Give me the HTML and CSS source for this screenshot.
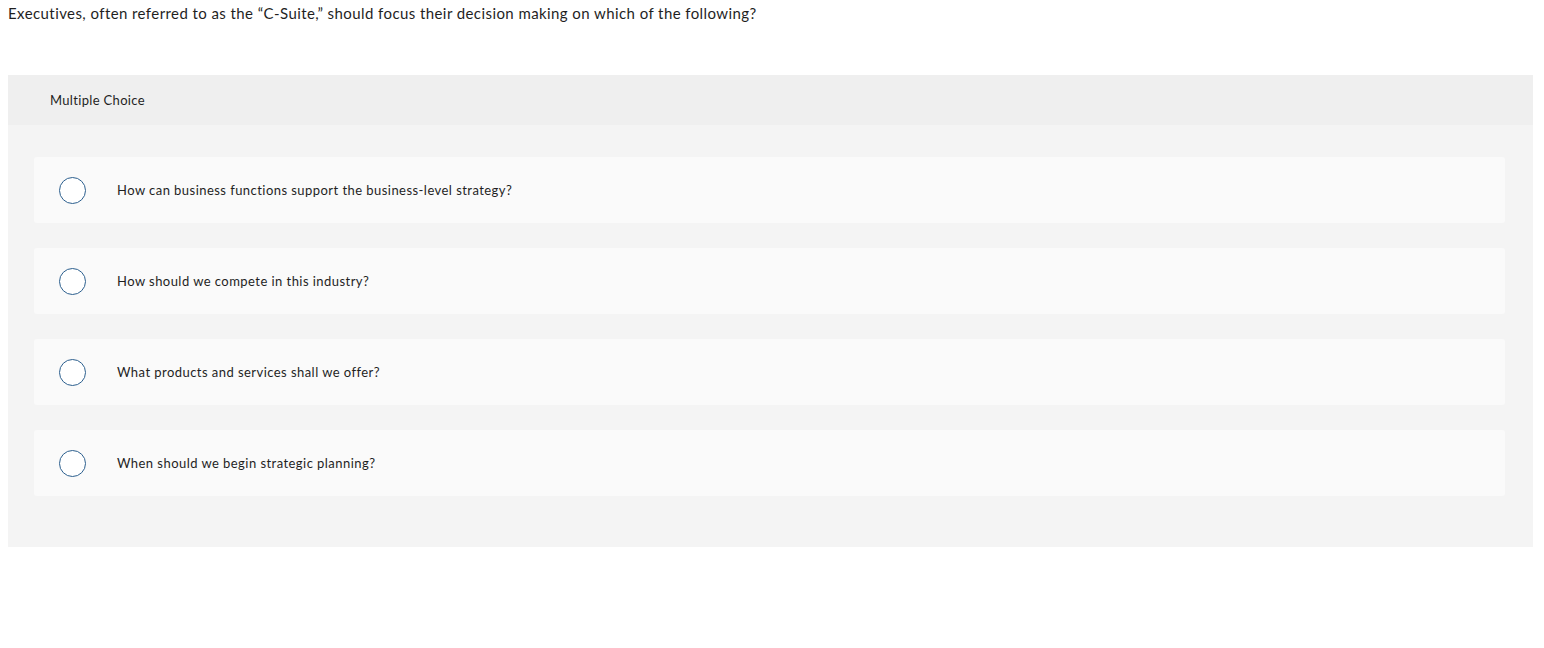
FILE: index.html
```html
<!DOCTYPE html>
<html>
<head>
<meta charset="utf-8">
<link rel="stylesheet" href="styles.css">
</head>
<body>
<p class="question">Executives, often referred to as the “C-Suite,” should focus their decision making on which of the following?</p>
<div class="card">
  <div class="card-head">Multiple Choice</div>
  <div class="options">
    <div class="option"><span class="radio"></span><span class="label">How can business functions support the business-level strategy?</span></div>
    <div class="option"><span class="radio"></span><span class="label">How should we compete in this industry?</span></div>
    <div class="option"><span class="radio"></span><span class="label">What products and services shall we offer?</span></div>
    <div class="option"><span class="radio"></span><span class="label">When should we begin strategic planning?</span></div>
  </div>
</div>
</body>
</html>
```
FILE: styles.css
```css
html, body { margin: 0; padding: 0; background: #fff; }
body {
  font-family: Lato, "Open Sans", "Liberation Sans", sans-serif;
  color: #1f1f1f;
}
.question {
  margin: 0;
  padding: 4px 0 0 8px;
  font-size: 15px;
  line-height: 18px;
  letter-spacing: 0.42px;
}
.card {
  margin: 53px 0 0 8px;
  width: 1525px;
  background: #f4f4f4;
}
.card-head {
  height: 50px;
  background: #efefef;
  display: flex;
  align-items: center;
  padding-left: 42px;
  font-size: 13px;
  letter-spacing: 0.33px;
}
.options {
  padding: 32px 28px 51px 26px;
  display: flex;
  flex-direction: column;
  gap: 25px;
}
.option {
  height: 66px;
  background: #fafafa;
  border-radius: 3px;
  display: flex;
  align-items: center;
}
.radio {
  box-sizing: border-box;
  width: 27px;
  height: 27px;
  border: 1.5px solid #2c5f8e;
  border-radius: 50%;
  background: #fff;
  margin-left: 25px;
  flex: none;
}
.label {
  margin-left: 31px;
  font-size: 13px;
  letter-spacing: 0.45px;
}
```
